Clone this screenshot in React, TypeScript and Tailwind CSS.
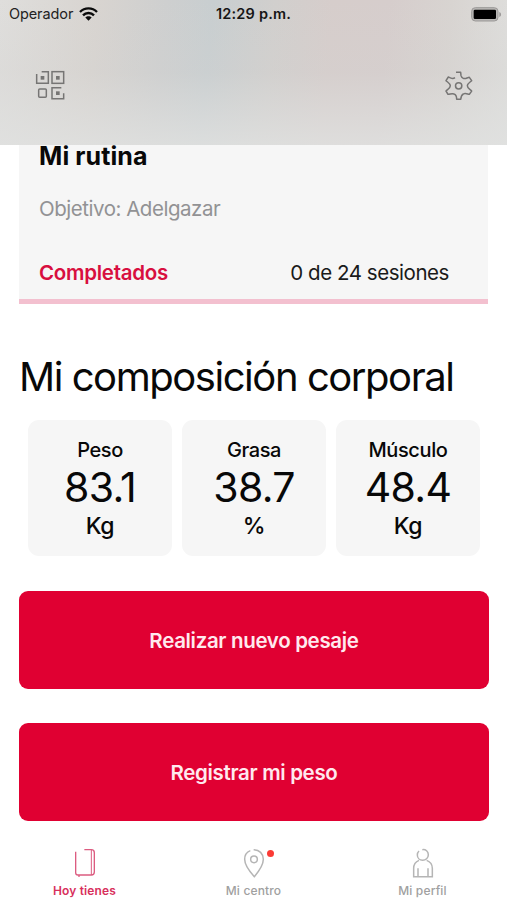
import React from 'react';

interface Metric {
  label: string;
  value: string;
  unit: string;
}

const metrics: Metric[] = [
  { label: 'Peso', value: '83.1', unit: 'Kg' },
  { label: 'Grasa', value: '38.7', unit: '%' },
  { label: 'Músculo', value: '48.4', unit: 'Kg' },
];

const WifiIcon = () => (
  <svg className="w-[19px] h-[14px]" viewBox="0 0 57 42" fill="none" stroke="#0b0b0b" strokeWidth="7">
    <path d="M3 15C17 0.5 40 0.5 54 15" />
    <path d="M12 25C21 15.500 36 15.500 45 25" />
    <path d="M19 31.500C24 26 33 26 38 31.500L28.500 41Z" fill="#0b0b0b" stroke="none" />
  </svg>
);

const BatteryIcon = () => (
  <svg className="w-[31px] h-[15px]" viewBox="0 0 93 45">
    <rect x="2" y="2" width="79" height="40" rx="11" fill="#b9b7b5" stroke="#9b9998" strokeWidth="3" />
    <rect x="8" y="8" width="67" height="28" rx="4" fill="#000" />
    <path d="M85 15C92 18 92 27 85 30Z" fill="#9b9998" />
  </svg>
);

const QrIcon = () => (
  <svg className="w-[30px] h-[30px]" viewBox="0 0 90 90" fill="none" stroke="#767574" strokeWidth="4.500">
    <path d="M5 12V40H40V5H20" />
    <rect x="51" y="5" width="35" height="35" />
    <rect x="11" y="57" width="23" height="25" rx="3" />
    <path d="M79 53H51V86H86V70" />
    <g fill="#767574" stroke="none">
      <rect x="17" y="18" width="11" height="11" />
      <rect x="63" y="18" width="11" height="11" />
      <rect x="63" y="64" width="11" height="11" />
    </g>
  </svg>
);

const GearIcon = () => (
  <svg className="w-[28px] h-[30px]" viewBox="0 0 84 90" fill="none" stroke="#767574" strokeWidth="4.500" strokeLinejoin="round">
    <path d="M33 4H47L48 14C50 22 58 25 66 21L73 19L80 29C75 34 67 37 67 44.500C67 52 75 55 80 60L73 70C67 69 61 65 55 69C49 72 48 78 47 85H35C35 78 33 71 27 69C21 66 15 70 9 70L3 60C8 55 16 52 16 44.500C16 37 8 34 3 29L10 18C16 21 22 26 30 20" />
    <circle cx="41" cy="44.500" r="9.500" />
  </svg>
);

const BookIcon = () => (
  <svg className="w-[22px] h-[30px]" viewBox="0 0 66 90" fill="none" stroke="#dc5c80" strokeWidth="4">
    <path d="M5 11V74Q5 81 12 81H52Q61 81 61 72V14Q61 5 52 5H31" />
    <path d="M52 5V81" strokeWidth="3" />
    <path d="M15 81V87" />
  </svg>
);

const PinIcon = () => (
  <svg className="w-[22px] h-[30px]" viewBox="0 0 66 90" fill="none" stroke="#b5b5b5" strokeWidth="4.500">
    <path d="M32 5C49 5 61 17 61 34C61 53 46 72 34 86C21 72 5 53 5 34C5 22 12 12 22 8" />
    <circle cx="33" cy="34" r="10" />
  </svg>
);

const ProfileIcon = () => (
  <svg className="w-[22px] h-[30px]" viewBox="0 0 66 90" fill="none" stroke="#b5b5b5" strokeWidth="4.500">
    <path d="M31 5C41 3 49 11 49 20C49 30 41 37 32 37C23 37 16 30 16 21C16 16 18 12 21 9" />
    <path d="M21 37C11 41 5 50 5 61V86H61V61C61 50 55 41 44 37" />
    <path d="M18 61V86M48 61V86" />
  </svg>
);

const Header = () => (
  <header className="h-[145px] shrink-0 bg-[linear-gradient(to_bottom,transparent_0%,#d4d4d340_50%,#e0e1e0d0_100%),linear-gradient(95deg,#dfdedc_0%,#d8d4d0_19%,#cecfcf_32%,#c8ced0_41%,#d1cfcd_53%,#d6cdcb_64%,#d6cdcc_75%,#d8d4d1_87%,#dfdfdd_100%)]">
    <div className="grid grid-cols-3 h-7 items-center pl-[9px] pr-[5px]">
      <div className="flex items-center gap-[6px]">
        <span className="text-[14.5px] tracking-[-0.1px] text-[#222]">Operador</span>
        <WifiIcon />
      </div>
      <span className="-ml-[4px] text-center text-[14.5px] font-semibold tracking-[0.2px] text-[#161616] whitespace-nowrap">12:29 p.m.</span>
      <div className="flex justify-end">
        <BatteryIcon />
      </div>
    </div>
    <div className="flex justify-between pt-[42px] pl-[35px] pr-[34px]">
      <QrIcon />
      <div className="pt-px">
        <GearIcon />
      </div>
    </div>
  </header>
);

const RoutineCard = () => (
  <section className="mx-[19px] h-[159px] w-[469px] shrink-0 bg-[#f6f6f6] border-b-[5px] border-[#f3c0cf] px-5">
    <h2 className="h-[22px] leading-[22px] text-[25px] font-bold tracking-[0.1px]">Mi rutina</h2>
    <p className="mt-[28px] leading-[28px] text-[20.500px] tracking-[-0.47px] text-[#929294]">Objetivo: Adelgazar</p>
    <div className="mt-9 flex justify-between pr-[19px] text-[20.500px] leading-[28px]">
      <span className="font-semibold tracking-[-0.27px] text-[#d80f3f]">Completados</span>
      <span className="tracking-[-0.45px] text-[#1a1a1a]">0 de 24 sesiones</span>
    </div>
  </section>
);

const MetricCard: React.FC<{ metric: Metric }> = ({ metric }) => (
  <div className="h-[136px] flex-1 rounded-[11px] bg-[#f6f6f6] flex flex-col items-center pt-[17px]">
    <span className="text-[20px] leading-[26px] font-medium tracking-[-0.4px]">{metric.label}</span>
    <span className="text-[41px] leading-[48px] tracking-[-0.7px]">{metric.value}</span>
    <span className="text-[23px] leading-[30px] font-medium tracking-[-0.4px]">{metric.unit}</span>
  </div>
);

const App: React.FC = () => {
  return (
    <div className="w-[507px] h-[900px] overflow-hidden bg-white text-[#080808] flex flex-col font-['Inter',sans-serif]">
      <Header />
      <RoutineCard />
      <h1 className="mt-[48px] ml-[19px] leading-[50px] text-[40px] tracking-[-1.45px] whitespace-nowrap">Mi composición corporal</h1>
      <div className="mt-[18px] ml-[28px] mr-[27px] flex gap-[10px]">
        {metrics.map((metric) => (
          <MetricCard key={metric.label} metric={metric} />
        ))}
      </div>
      <div className="mt-[35px] mx-[19px] w-[470px] flex flex-col gap-[34px] text-[20.500px] font-semibold tracking-[-0.33px] text-[#ffe9ee]">
        <button className="h-[98px] pt-[2px] rounded-[9px] bg-[#e00032]">Realizar nuevo pesaje</button>
        <button className="h-[98px] pt-[2px] rounded-[9px] bg-[#e00032]">Registrar mi peso</button>
      </div>
      <nav className="mt-[27px] grid grid-cols-3 text-[12px] leading-[16px] font-medium tracking-[0.15px] text-[#a0a0a0]">
        <div className="flex flex-col items-center gap-[5px] font-semibold text-[#d8305c]">
          <BookIcon />
          <span>Hoy tienes</span>
        </div>
        <div className="flex flex-col items-center gap-[5px]">
          <div className="relative">
            <PinIcon />
            <span className="absolute top-[2px] -right-[9px] size-[7px] rounded-full bg-[#fb3b35]" />
          </div>
          <span>Mi centro</span>
        </div>
        <div className="flex flex-col items-center gap-[5px]">
          <ProfileIcon />
          <span>Mi perfil</span>
        </div>
      </nav>
    </div>
  );
};

export default App;
